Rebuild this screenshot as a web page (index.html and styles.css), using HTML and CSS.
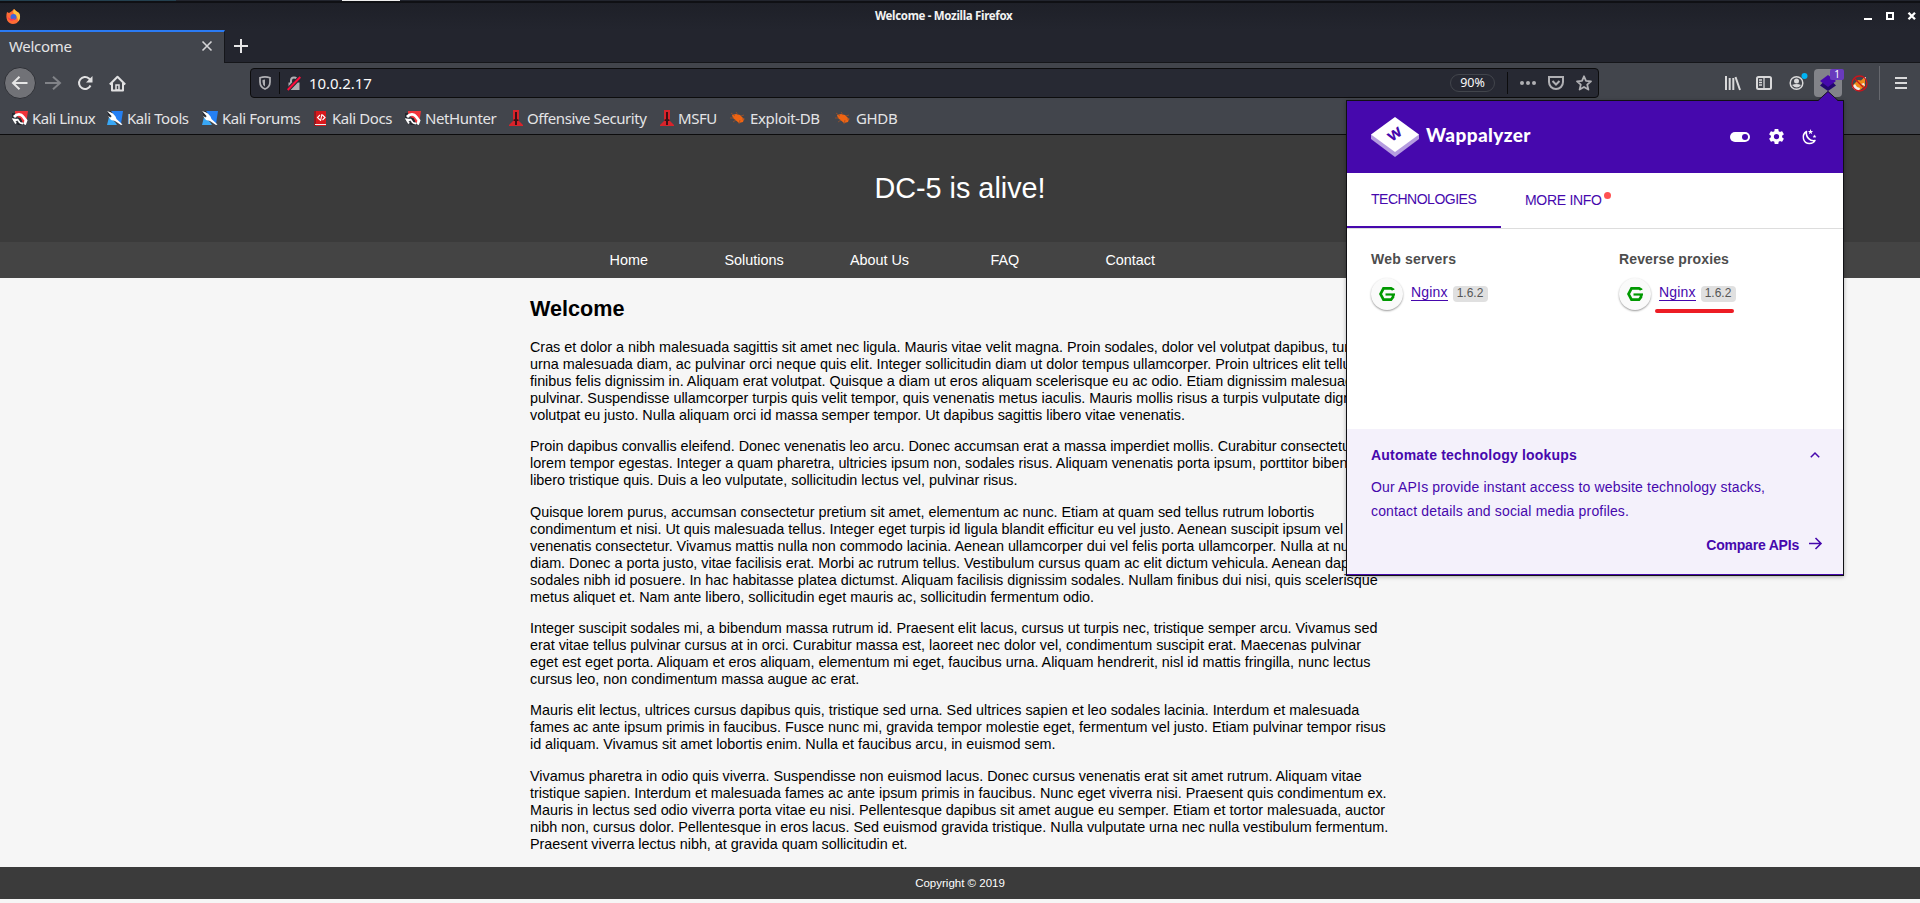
FILE: index.html
```html
<!DOCTYPE html>
<html lang="en">
<head>
<meta charset="utf-8">
<title>Welcome</title>
<link rel="stylesheet" href="styles.css">
</head>
<body>
<svg class="defs" width="0" height="0">
  <symbol id="dragon" viewBox="0 0 16 14">
    <path d="M3 0h13l-2 13-4-2-7-9z" fill="#f0343a"/>
    <path d="M0 2h3v3l-3 5zM2 11l4 3h7l-3-3z" fill="#25282f"/>
    <path d="M2 6C5 2.500 9 2.500 11 5.500l3 4-1.500 4" fill="none" stroke="#fff" stroke-width="2.800"/>
    <path d="M11 12.500C8 12.500 6.500 11 7 8.500L4 9 1.500 8.500 4 12.500" fill="none" stroke="#fff" stroke-width="1.800"/>
    <path d="M5.500 6.500l3 .5 2 3.500-1.500 1-2-2.500z" fill="#25282f"/>
  </symbol>
  <symbol id="tool" viewBox="0 0 16 14">
    <path d="M4 0h12l-2 13-3-3-8-7z" fill="#2580f3"/><path d="M0 14l2-8 6 5 2 3z" fill="#39a7f5"/><path d="M0 0h4l3 4-5 2z" fill="#25282f"/>
    <path d="M0 0l3 1 3 1.500 2.500 3L9.500 8l6 5.500-1.500.5-6-4-4-1L1 5l3 1.500L4.500 5z" fill="#fff"/>
  </symbol>
  <symbol id="dagger" viewBox="0 0 14 17">
    <path d="M4 0h6v11l4 4v1H0v-1l4-4z" fill="#d9232b"/><path d="M6 2h2v7l2 1-1 1H8v4H6v-4H5l-1-1 2-1z" fill="#3c1014"/>
  </symbol>
  <symbol id="bug" viewBox="0 0 16 12">
    <path d="M2 3l4-1 4 1 4 4-1 3-4 1-6-5z" fill="#f06412"/><path d="M1 1l4 3M6 0l2 3M0 6h4M3 10l3-2M14 3l-3 1M15 7h-3M10 8l-1 4" stroke="#9d5229" stroke-width=".8"/>
  </symbol>
  <symbol id="nginx" viewBox="0 0 16 14">
    <path d="M14 3V2.500L12 1.300H4.500L1.500 7l3 5.700h7.500L14 10V8" fill="none" stroke="#009900" stroke-width="2.700"/>
    <path d="M16 7.500H6.500" stroke="#009900" stroke-width="2.200"/>
  </symbol>
</svg>

<header class="browser">
  <div class="desktop"><i class="teal"></i><i class="mark"></i></div>
  <div class="titlebar">
    <svg class="fox" width="15" height="15" viewBox="0 0 15 15"><path d="M1 3l2 1 3-2 2-2 2 2 3 2c3 6-1 11-6 11S-1 10 1 3z" fill="#ff6b35"/><path d="M8 0l2 2 3 2c2 3 1 7-1 8 0-5-4-6-5-9z" fill="#ffc23d"/><circle cx="7.500" cy="8" r="3" fill="#4166dc"/><path d="M1 6c1 4 5 5 8 3-1 4-7 4-8-3z" fill="#ff3750"/></svg>
    <span class="wintitle">Welcome - Mozilla Firefox</span>
    <svg class="winctl" width="54" height="10" viewBox="0 0 54 10"><path d="M0 8h8" stroke="#fff" stroke-width="2"/><path d="M23 2h6v6h-6z" fill="none" stroke="#fff" stroke-width="2"/><path d="M44.500 1.700l6.500 6.600M51 1.700l-6.500 6.600" stroke="#fff" stroke-width="2.300"/></svg>
  </div>
  <div class="tabs">
    <div class="tab"><span class="ui tabname">Welcome</span><svg width="10" height="10" viewBox="0 0 10 10"><path d="M.5.500l9 9m0-9l-9 9" stroke="#d5d5d7" stroke-width="1.600"/></svg></div>
    <svg class="plus" width="14" height="14" viewBox="0 0 14 14"><path d="M7 0v14M0 7h14" stroke="#e6e6e7" stroke-width="2"/></svg>
  </div>
  <div class="toolbar">
    <span class="back"><svg width="18" height="16" viewBox="0 0 18 16"><path d="M16.500 8H2m6.500-6.300L2 8l6.500 6.300" fill="none" stroke="#e6e6e6" stroke-width="2"/></svg></span>
    <svg class="fwd" width="16" height="14" viewBox="0 0 16 14"><path d="M0 7h15M8 .7L15 7l-7 6.300" fill="none" stroke="#818388" stroke-width="2"/></svg>
    <svg class="reload" width="16" height="16" viewBox="0 0 16 16"><path d="M13.500 10.500A6 6 0 1 1 12 3.500l2 2" fill="none" stroke="#e1e1e2" stroke-width="2"/><path d="M15.500 1v6.500H9z" fill="#e1e1e2"/></svg>
    <svg class="home" width="17" height="17" viewBox="0 0 17 17"><path d="M.8 9.500L8.500 1.700l7.700 7.800M3 8v7.500h11V8" fill="none" stroke="#e1e1e2" stroke-width="2" stroke-linejoin="round"/><path d="M7 15v-5h3v5z" fill="none" stroke="#e1e1e2" stroke-width="1.500"/></svg>
    <div class="url">
      <svg class="shield" width="12" height="14" viewBox="0 0 12 14"><path d="M1 1.700Q6 0 11 1.700V6q0 5-5 7-5-2-5-7z" fill="none" stroke="#b0b0b4" stroke-width="1.700"/><path d="M6 3.500v7Q3.500 9 3.500 6V4z" fill="#b0b0b4"/></svg>
      <i class="sep"></i>
      <svg class="lock" width="14" height="15" viewBox="0 0 14 15"><path d="M4 7V4.500a3 3 0 0 1 6 0V7" fill="none" stroke="#b0b0b4" stroke-width="2"/><path d="M1.500 6.500h11V14h-11z" fill="#b0b0b4"/><path d="M.7 14L13.300 1" stroke="#272933" stroke-width="4"/><path d="M.7 14L13.300 1" stroke="#ff0b3a" stroke-width="2"/></svg>
      <span class="ui addr">10.0.2.17</span>
      <span class="zoom">90%</span><i class="sep"></i>
      <svg class="dots" width="16" height="4" viewBox="0 0 16 4"><g fill="#b0b0b4"><circle cx="2" cy="2" r="2"/><circle cx="8" cy="2" r="2"/><circle cx="14" cy="2" r="2"/></g></svg>
      <svg class="pocket" width="16" height="14" viewBox="0 0 16 14"><path d="M1 1h14v5a7 7 0 0 1-14 0z" fill="none" stroke="#b0b0b4" stroke-width="2"/><path d="M4.500 5L8 8.500 11.500 5" fill="none" stroke="#b0b0b4" stroke-width="2"/></svg>
      <svg width="16" height="16" viewBox="0 0 16 16"><path d="M8 1.300l2 4.500 5 .5-3.800 3.300 1.200 5L8 12l-4.400 2.600 1.200-5L1 6.300l5-.5z" fill="none" stroke="#b0b0b4" stroke-width="1.800" stroke-linejoin="round"/></svg>
    </div>
    <svg class="library" width="16" height="14" viewBox="0 0 16 14"><path d="M1 0v14M4.700 2v12M8.300 2v12M10.500 1l4.500 13" fill="none" stroke="#d9d9da" stroke-width="2"/></svg>
    <svg class="sidebar" width="16" height="14" viewBox="0 0 16 14"><rect x="1" y="1" width="14" height="12" rx="1.500" fill="none" stroke="#d9d9da" stroke-width="2"/><path d="M8 1v12M3 4h3M3 6.500h3M3 9h3" stroke="#d9d9da" stroke-width="1.300"/></svg>
    <svg class="account" width="19" height="18" viewBox="0 0 19 18"><circle cx="7.500" cy="10" r="6.300" fill="none" stroke="#d9d9da" stroke-width="1.500"/><circle cx="7.500" cy="8" r="2.500" fill="#d9d9da"/><path d="M3 12q4.500-2 9 0-4 5-9 0" fill="#d9d9da"/><circle cx="15.500" cy="3" r="3" fill="#00b3f4"/></svg>
    <span class="ext"><svg width="16" height="16" viewBox="0 0 16 16"><path d="M0 10.500l8 5.500 8-5.500-3-3H3z" fill="#22066d"/><path d="M0 6l8-6 8 6-8 6z" fill="#4608ad"/></svg><b class="badge">1</b></span>
    <svg class="foxy" width="17" height="17" viewBox="0 0 17 17"><path d="M2 10l5-5 3 .5L14 2v9l-5 4-6-1z" fill="#f08a19"/><path d="M1 12l3-3 2 3 3 1-1 3-4-1zM12 3l3-1v3zM10 9l3-1 1 3z" fill="#eee"/><circle cx="8.500" cy="8.500" r="7.500" fill="none" stroke="#c9151b" stroke-width="1.300"/><path d="M3 3l11 11" stroke="#c9151b" stroke-width="1.300"/></svg>
    <i class="toolsep"></i>
    <svg class="menu" width="12" height="12" viewBox="0 0 12 12"><path d="M0 1h12M0 6h12M0 11h12" stroke="#d9d9da" stroke-width="2"/></svg>
  </div>
  <nav class="bookmarks ui">
    <a class="b1"><svg width="16" height="14"><use href="#dragon"/></svg><span>Kali Linux</span></a>
    <a class="b2"><svg width="16" height="14"><use href="#tool"/></svg><span>Kali Tools</span></a>
    <a class="b3"><svg width="16" height="14"><use href="#tool"/></svg><span>Kali Forums</span></a>
    <a class="b4"><svg width="14" height="16" viewBox="0 0 14 16"><path d="M2 1h10v15H2z" fill="#d7181c"/><path d="M0 1h2v15H0z" fill="#8e1b21"/><path d="M1 14h11v1H1z" fill="#eee"/><path d="M6 5L3.500 7.500 6 10M8.500 5L11 7.500 8.500 10M8 4L6.500 11" fill="none" stroke="#fff" stroke-width="1.100"/></svg><span>Kali Docs</span></a>
    <a class="b5"><svg width="16" height="14"><use href="#dragon"/></svg><span>NetHunter</span></a>
    <a class="b6"><svg width="14" height="17"><use href="#dagger"/></svg><span>Offensive Security</span></a>
    <a class="b7"><svg width="14" height="17"><use href="#dagger"/></svg><span>MSFU</span></a>
    <a class="b8"><svg width="16" height="12"><use href="#bug"/></svg><span>Exploit-DB</span></a>
    <a class="b9"><svg width="16" height="12"><use href="#bug"/></svg><span>GHDB</span></a>
  </nav>
</header>

<div class="page">
  <div class="hero">DC-5 is alive!</div>
  <nav class="sitenav"><ul><li>Home</li><li>Solutions</li><li>About Us</li><li>FAQ</li><li>Contact</li></ul></nav>
  <main class="body">
    <h2>Welcome</h2>
    <p>Cras et dolor a nibh malesuada sagittis sit amet nec ligula. Mauris vitae velit magna. Proin sodales, dolor vel volutpat dapibus, turpis<br>urna malesuada diam, ac pulvinar orci neque quis elit. Integer sollicitudin diam ut dolor tempus ullamcorper. Proin ultrices elit tellus,<br>finibus felis dignissim in. Aliquam erat volutpat. Quisque a diam ut eros aliquam scelerisque eu ac odio. Etiam dignissim malesuada<br>pulvinar. Suspendisse ullamcorper turpis quis velit tempor, quis venenatis metus iaculis. Mauris mollis risus a turpis vulputate dignissim<br>volutpat eu justo. Nulla aliquam orci id massa semper tempor. Ut dapibus sagittis libero vitae venenatis.</p>
    <p>Proin dapibus convallis eleifend. Donec venenatis leo arcu. Donec accumsan erat a massa imperdiet mollis. Curabitur consectetur<br>lorem tempor egestas. Integer a quam pharetra, ultricies ipsum non, sodales risus. Aliquam venenatis porta ipsum, porttitor bibendum<br>libero tristique quis. Duis a leo vulputate, sollicitudin lectus vel, pulvinar risus.</p>
    <p>Quisque lorem purus, accumsan consectetur pretium sit amet, elementum ac nunc. Etiam at quam sed tellus rutrum lobortis<br>condimentum et nisi. Ut quis malesuada tellus. Integer eget turpis id ligula blandit efficitur eu vel justo. Aenean suscipit ipsum vel<br>venenatis consectetur. Vivamus mattis nulla non commodo lacinia. Aenean ullamcorper dui vel felis porta ullamcorper. Nulla at nunc<br>diam. Donec a porta justo, vitae facilisis erat. Morbi ac rutrum tellus. Vestibulum cursus quam ac elit dictum vehicula. Aenean dapibus<br>sodales nibh id posuere. In hac habitasse platea dictumst. Aliquam facilisis dignissim sodales. Nullam finibus dui nisi, quis scelerisque<br>metus aliquet et. Nam ante libero, sollicitudin eget mauris ac, sollicitudin fermentum odio.</p>
    <p>Integer suscipit sodales mi, a bibendum massa rutrum id. Praesent elit lacus, cursus ut turpis nec, tristique semper arcu. Vivamus sed<br>erat vitae tellus pulvinar cursus at in orci. Curabitur massa est, laoreet nec dolor vel, condimentum suscipit erat. Maecenas pulvinar<br>eget est eget porta. Aliquam et eros aliquam, elementum mi eget, faucibus urna. Aliquam hendrerit, nisl id mattis fringilla, nunc lectus<br>cursus leo, non condimentum massa augue ac erat.</p>
    <p>Mauris elit lectus, ultrices cursus dapibus quis, tristique sed urna. Sed ultrices sapien et leo sodales lacinia. Interdum et malesuada<br>fames ac ante ipsum primis in faucibus. Fusce nunc mi, gravida tempor molestie eget, fermentum vel justo. Etiam pulvinar tempor risus<br>id aliquam. Vivamus sit amet lobortis enim. Nulla et faucibus arcu, in euismod sem.</p>
    <p>Vivamus pharetra in odio quis viverra. Suspendisse non euismod lacus. Donec cursus venenatis erat sit amet rutrum. Aliquam vitae<br>tristique sapien. Interdum et malesuada fames ac ante ipsum primis in faucibus. Nunc eget viverra nisi. Praesent quis condimentum ex.<br>Mauris in lectus sed odio viverra porta vitae eu nisi. Pellentesque dapibus sit amet augue eu semper. Etiam et tortor malesuada, auctor<br>nibh non, cursus dolor. Pellentesque in eros lacus. Sed euismod gravida tristique. Nulla vulputate urna nec nulla vestibulum fermentum.<br>Praesent viverra lectus nibh, at gravida quam sollicitudin et.</p>
  </main>
  <footer class="foot">Copyright © 2019</footer>
</div>

<aside class="popup">
  <svg class="arrow" width="20" height="10" viewBox="0 0 20 10"><path d="M0 10L10 0l10 10z" fill="#4608ad"/><path d="M0 9.500L10 .5l10 9" fill="none" stroke="#16161c"/></svg>
  <div class="phead">
    <svg class="plogo" width="48" height="40" viewBox="0 0 48 40"><path d="M0 17.500v4.500L24 40l24-18v-4.500z" fill="#b59ce0"/><path d="M0 17.500L24 0l24 17.500L24 35z" fill="#fff"/><text class="w" transform="translate(24 17.500) rotate(-35)" x="0" y="4.500" text-anchor="middle">w</text></svg>
    <span class="pname">Wappalyzer</span>
    <svg class="toggle" width="20" height="10" viewBox="0 0 20 10"><rect width="20" height="10" rx="5" fill="#fff"/><circle cx="15" cy="5" r="3" fill="#4608ad"/></svg>
    <svg class="gear" width="15" height="15" viewBox="2 2 20 20"><path fill="#fff" d="M12 15.500A3.500 3.500 0 0 1 8.500 12 3.500 3.500 0 0 1 12 8.500a3.500 3.500 0 0 1 3.500 3.500 3.500 3.500 0 0 1-3.500 3.500m7.430-2.530c.04-.32.070-.64.070-.97s-.03-.66-.07-1l2.110-1.630c.19-.15.240-.42.120-.64l-2-3.460c-.12-.22-.39-.31-.61-.22l-2.490 1c-.52-.39-1.060-.73-1.690-.98l-.37-2.650A.506.506 0 0 0 14 2h-4c-.25 0-.46.180-.5.420l-.37 2.650c-.63.250-1.170.59-1.690.98l-2.490-1c-.22-.09-.49 0-.61.220l-2 3.460c-.13.220-.07.490.12.640L4.570 11c-.04.340-.07.670-.07 1s.03.650.07.970l-2.110 1.660c-.19.150-.25.420-.12.640l2 3.460c.12.220.39.300.61.220l2.490-1.010c.52.400 1.060.740 1.690.990l.37 2.650c.04.240.25.420.5.420h4c.25 0 .46-.18.500-.42l.37-2.650c.63-.26 1.170-.59 1.690-.99l2.490 1.010c.22.080.49 0 .61-.22l2-3.460c.12-.22.070-.49-.12-.64z"/></svg>
    <svg class="moon" width="15" height="16" viewBox="0 0 15 16"><path d="M4.500 2.500C-1 6 1 14.500 7.500 14.500c2.500 0 4.500-1 5.500-3C8.500 12.500 3.500 8.500 4.500 2.500z" fill="none" stroke="#fff" stroke-width="1.500" stroke-linejoin="round"/><path d="M8.500 0l.7 2 2 .1-1.600 1.200.6 2-1.700-1.200-1.700 1.200.6-2-1.600-1.200 2-.1zM12.500 5.500l.5 1.300 1.400.1-1.100.9.400 1.300-1.200-.8-1.200.8.400-1.300-1.100-.9 1.400-.1z" fill="#fff"/></svg>
  </div>
  <div class="ptabs"><span class="ptab on">TECHNOLOGIES</span><span class="ptab more">MORE INFO<i class="dot"></i></span></div>
  <div class="pbody">
    <section><h3>Web servers</h3><div class="tech"><span class="ico"><svg width="16" height="14"><use href="#nginx"/></svg></span><a>Nginx</a><span class="ver">1.6.2</span></div></section>
    <section><h3 class="rev">Reverse proxies</h3><div class="tech"><span class="ico"><svg width="16" height="14"><use href="#nginx"/></svg></span><a>Nginx</a><span class="ver">1.6.2</span></div><i class="stroke"></i></section>
  </div>
  <div class="pfoot">
    <div class="row"><b class="auto">Automate technology lookups</b><svg width="10" height="6" viewBox="0 0 10 6"><path d="M.8 5.300L5 1l4.200 4.300" fill="none" stroke="#4608ad" stroke-width="1.500"/></svg></div>
    <p>Our APIs provide instant access to website technology stacks,<br>contact details and social media profiles.</p>
    <div class="cmp"><b>Compare APIs</b><svg width="13" height="13" viewBox="0 0 13 13"><path d="M0 6.500h12M6.500 1L12 6.500 6.500 12" fill="none" stroke="#4608ad" stroke-width="1.600"/></svg></div>
  </div>
</aside>
</body>
</html>
```
FILE: styles.css
```css
* { box-sizing: border-box; }
body { margin: 0; width: 1920px; height: 903px; overflow: hidden; background: #f6f6f6; font-family: "Liberation Sans", Arial, sans-serif; font-size: 14.4px; color: #000; }
svg { display: block; flex: none; overflow: visible; }
i { font-style: normal; }
.defs { position: absolute; }
.ui { font-family: "Noto Sans", sans-serif; font-size: 15px; color: #e4e4e6; }

/* browser chrome */
.browser { height: 135px; background: #42454c; border-bottom: 1px solid #0c0c0d; display: flex; flex-direction: column; }
.desktop { height: 3px; background: #22252e; border-bottom: 2px solid #0f1014; display: flex; flex: none; }
.teal { width: 176px; background: #24404f; }
.mark { width: 58px; margin-left: 166px; background: #eee; }
.titlebar { height: 27px; background: linear-gradient(#1e2028, #23252e); display: flex; align-items: center; flex: none; }
.fox { margin: -1px 0 0 6px; }
.wintitle { margin: -2px 0 0 854px; width: 140px; white-space: nowrap; font: bold 11.5px "Noto Sans", sans-serif; letter-spacing: -.32px; color: #f2f2f2; }
.winctl { margin: -1px 0 0 849px; }
.tabs { height: 33px; background: #23252e; border-bottom: 1px solid #15161a; display: flex; flex: none; }
.tab { width: 225px; height: 33px; background: #42454c; border-top: 2px solid #2a7af3; border-right: 1px solid #15161a; padding: 0 12px 3px 9px; display: flex; align-items: center; justify-content: space-between; box-shadow: 0 1px #42454c; }
.tabname { letter-spacing: -.3px; }
.plus { margin: 9px 0 0 9px; }
.toolbar { height: 40px; display: flex; align-items: center; flex: none; }
.back { width: 32px; height: 32px; margin-left: 4px; border-radius: 50%; background: #717277; border: 1px solid #2f3137; display: flex; align-items: center; justify-content: center; }
.fwd { margin-left: 9px; }
.reload { margin-left: 16px; }
.home { margin-left: 16px; }
.url { width: 1349px; height: 30px; margin-left: 124px; border: 1px solid #0c0c0d; border-radius: 4px; background: #272933; display: flex; align-items: center; }
.shield { margin: 0 8px; }
.sep { width: 1px; height: 22px; background: #0c0c0d; }
.lock { margin: 0 8px 0 7px; }
.addr { width: 1141px; letter-spacing: -.1px; color: #f9f9fa; }
.zoom { width: 45px; height: 18px; margin-right: 12px; border: 1px solid #42454c; border-radius: 9px; font: 12.500px/15px "Noto Sans", sans-serif; color: #f9f9fa; text-align: center; }
.dots { margin: 0 12px; }
.pocket { margin-right: 12px; }
.library { margin-left: 126px; }
.sidebar { margin-left: 15px; }
.account { margin: -3px 0 0 17px; }
.ext { position: relative; width: 28px; height: 28px; margin-left: 6px; border-radius: 4px; background: #828389; display: flex; align-items: center; justify-content: center; }
.badge { position: absolute; top: 0; right: -2px; width: 14px; height: 11px; background: #693bbd; border-radius: 2px; color: #fff; font: 10px/11px "Noto Sans", sans-serif; text-align: center; }
.foxy { margin-left: 9px; }
.toolsep { width: 1px; height: 34px; margin-left: 11px; background: #66686e; }
.menu { margin-left: 15px; }
.bookmarks { flex: 1; display: flex; padding-left: 12px; }
.bookmarks a { display: flex; align-items: center; gap: 4px; height: 30px; white-space: nowrap; letter-spacing: -.42px; flex: none; }
.b1, .b2 { width: 95px; }
.b3 { width: 112px; }
.b4 { width: 91px; }
.b5 { width: 104px; }
.b6 { width: 151px; }
.b7 { width: 70px; }
.bookmarks .b8 { width: 105px; letter-spacing: -.35px; }
.bookmarks .b9 { gap: 5px; letter-spacing: -.35px; }

/* site */
.page { height: 768px; }
.hero { height: 107px; background: #3b3b3b; color: #fff; font-size: 28.800px; line-height: 107px; text-align: center; }
.sitenav { height: 36px; background: #444; color: #fff; }
.sitenav ul { margin: 0; padding: 0 0 0 566px; display: flex; list-style: none; line-height: 36px; text-align: center; }
.sitenav li { width: 125.400px; }
.body { width: 860px; height: 589px; margin: 0 auto; padding-top: 18px; }
.body h2 { margin: 0 0 17.850px; font-size: 21.600px; line-height: 25px; }
.body p { margin: 0 0 14.400px; line-height: 17px; white-space: nowrap; letter-spacing: -.025px; }
.foot { height: 32px; background: #3b3b3b; color: #fff; font-size: 11.500px; line-height: 32px; text-align: center; }

/* extension popup */
.popup { position: absolute; left: 1346px; top: 100px; width: 498px; height: 476px; border: 1px solid #101014; background: #fff; color: #4608ad; box-shadow: 0 1px 4px rgba(0,0,0,.3); }
.arrow { position: absolute; left: 471px; top: -10px; }
.phead { height: 72px; background: #4608ad; display: flex; padding-left: 24px; }
.plogo { margin-top: 16px; }
.w { font: 900 18px Lato, sans-serif; fill: #4608ad; }
.pname { width: 110px; margin: 20px 0 0 7px; font: 900 19px/28px Lato, sans-serif; letter-spacing: .4px; color: #fff; }
.toggle { margin: 31px 0 0 194px; }
.gear { margin: 28px 0 0 19px; }
.moon { margin: 28px 0 0 18px; }
.ptabs { height: 56px; border-bottom: 1px solid #ddd; display: flex; }
.ptab { height: 55px; font-size: 14px; line-height: 53px; padding-left: 24px; }
.ptab.on { width: 154px; border-bottom: 2px solid #4608ad; letter-spacing: -.5px; }
.ptab.more { display: flex; line-height: 55px; letter-spacing: -.3px; }
.dot { width: 7px; height: 7px; margin: 19px 0 0 2px; border-radius: 50%; background: #ff5252; }
.pbody { height: 200px; padding: 21px 0 0 24px; display: flex; }
.pbody section { width: 248px; flex: none; }
.pbody h3 { margin: 0; font-size: 14px; line-height: 18px; letter-spacing: .2px; color: #4d4d4d; }
.pbody .rev { letter-spacing: .12px; }
.tech { display: flex; margin-top: 9px; }
.ico { width: 32px; height: 32px; margin-top: 1px; border-radius: 50%; background: #fafafa; box-shadow: 0 1px 2px rgba(0,0,0,.4); display: flex; align-items: center; justify-content: center; }
.tech a { height: 18px; margin: 6px 5px 0 8px; font-size: 14px; line-height: 18px; letter-spacing: .15px; border-bottom: 1px solid #4608ad; }
.ver { width: 35px; height: 16px; margin-top: 9px; border-radius: 4px; background: #e0e0e0; color: #555; font-size: 12px; line-height: 15px; text-align: center; }
.stroke { display: block; width: 79px; height: 4px; margin: -1px 0 0 36px; border-radius: 2px; background: #ed1c24; }
.pfoot { height: 146px; background: #f4f1fb; border-bottom: 1px solid #4608ad; padding: 16px 21px 0 24px; font-size: 14px; }
.row { display: flex; align-items: center; justify-content: space-between; height: 20px; padding-right: 2px; }
.auto { letter-spacing: .2px; }
.pfoot p { margin: 10px 0 0; line-height: 24px; white-space: nowrap; letter-spacing: .16px; }
.cmp { display: flex; justify-content: flex-end; align-items: center; gap: 10px; margin-top: 14px; letter-spacing: -.2px; }
.cmp svg { margin-top: -3px; }
```
